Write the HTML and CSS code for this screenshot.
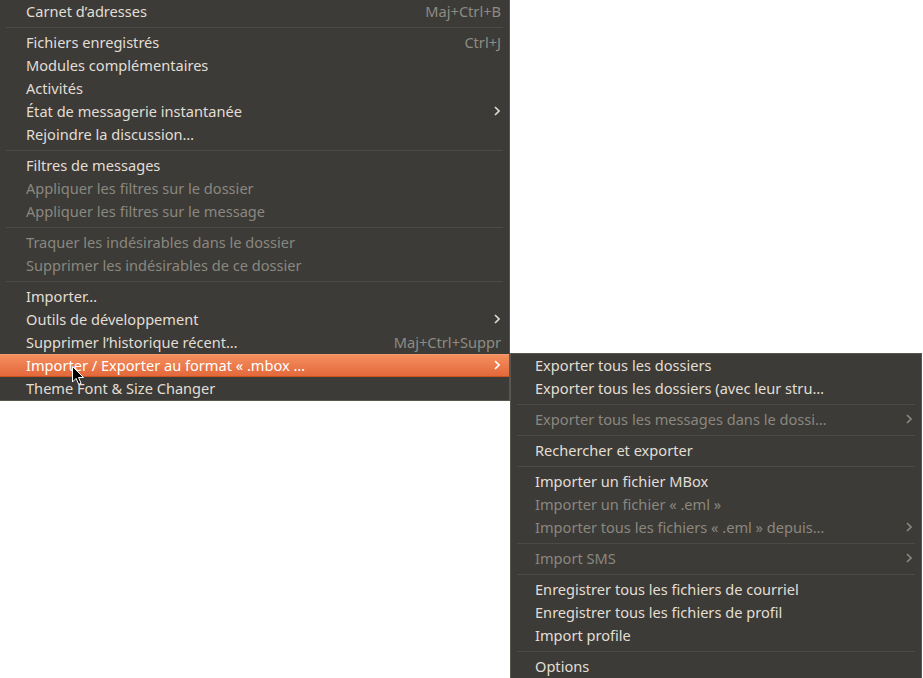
FILE: index.html
```html
<!DOCTYPE html>
<html lang="fr">
<head>
    <meta charset="UTF-8">
    <title>Outils</title>
    <link rel="stylesheet" href="styles.css">
</head>
<body>
    <div class="screen">
        <div class="menu">
            <div class="item"><span class="label">Carnet d’adresses</span><span class="accel">Maj+Ctrl+B</span></div>
            <div class="sep"></div>
            <div class="item"><span class="label">Fichiers enregistrés</span><span class="accel">Ctrl+J</span></div>
            <div class="item"><span class="label">Modules complémentaires</span></div>
            <div class="item"><span class="label">Activités</span></div>
            <div class="item"><span class="label">État de messagerie instantanée</span><svg class="arrow" viewBox="0 0 6 10"><path d="M1 1l4 4-4 4"/></svg></div>
            <div class="item"><span class="label">Rejoindre la discussion…</span></div>
            <div class="sep"></div>
            <div class="item"><span class="label">Filtres de messages</span></div>
            <div class="item disabled"><span class="label">Appliquer les filtres sur le dossier</span></div>
            <div class="item disabled"><span class="label">Appliquer les filtres sur le message</span></div>
            <div class="sep"></div>
            <div class="item disabled"><span class="label">Traquer les indésirables dans le dossier</span></div>
            <div class="item disabled"><span class="label">Supprimer les indésirables de ce dossier</span></div>
            <div class="sep"></div>
            <div class="item"><span class="label">Importer…</span></div>
            <div class="item"><span class="label">Outils de développement</span><svg class="arrow" viewBox="0 0 6 10"><path d="M1 1l4 4-4 4"/></svg></div>
            <div class="item"><span class="label">Supprimer l’historique récent…</span><span class="accel">Maj+Ctrl+Suppr</span></div>
            <div class="item active"><span class="label">Importer / Exporter au format « .mbox …</span><svg class="arrow" viewBox="0 0 6 10"><path d="M1 1l4 4-4 4"/></svg></div>
            <div class="item"><span class="label">Theme Font &amp; Size Changer</span></div>
        </div>

        <!-- sous-menu ouvert depuis « Importer / Exporter » -->
        <div class="menu submenu">
            <div class="item"><span class="label">Exporter tous les dossiers</span></div>
            <div class="item"><span class="label">Exporter tous les dossiers (avec leur stru…</span></div>
            <div class="sep"></div>
            <div class="item disabled"><span class="label">Exporter tous les messages dans le dossi…</span><svg class="arrow" viewBox="0 0 6 10"><path d="M1 1l4 4-4 4"/></svg></div>
            <div class="sep"></div>
            <div class="item"><span class="label">Rechercher et exporter</span></div>
            <div class="sep"></div>
            <div class="item"><span class="label">Importer un fichier MBox</span></div>
            <div class="item disabled"><span class="label">Importer un fichier « .eml »</span></div>
            <div class="item disabled"><span class="label">Importer tous les fichiers « .eml » depuis…</span><svg class="arrow" viewBox="0 0 6 10"><path d="M1 1l4 4-4 4"/></svg></div>
            <div class="sep"></div>
            <div class="item disabled"><span class="label">Import SMS</span><svg class="arrow" viewBox="0 0 6 10"><path d="M1 1l4 4-4 4"/></svg></div>
            <div class="sep"></div>
            <div class="item"><span class="label">Enregistrer tous les fichiers de courriel</span></div>
            <div class="item"><span class="label">Enregistrer tous les fichiers de profil</span></div>
            <div class="item"><span class="label">Import profile</span></div>
            <div class="sep"></div>
            <div class="item"><span class="label">Options</span></div>
        </div>

        <svg class="cursor" viewBox="0 0 12 19" width="12" height="19">
            <path d="M0.5 0.5v15.5l3.6-3.6 2.6 5.9 2.4-1-2.6-5.8h5z" fill="#000" stroke="#fff" stroke-width="1"/>
        </svg>
    </div>
</body>
</html>
```

FILE: styles.css
```css
body {
    margin: 0;
    background: #fff;
    overflow: hidden;
    font-family: "Noto Sans", "DejaVu Sans", sans-serif;
    font-size: 14.6px;
}

.screen {
    position: relative;
    height: 678px;
}

.menu {
    width: 510px;
    background: #3c3b37;
    color: #e2ded5;
    border-right: 1px solid #57564f;
    border-bottom: 1px solid #57564f;
    box-sizing: border-box;
}

.item {
    display: flex;
    align-items: center;
    box-sizing: border-box;
    height: 23px;
    padding: 0 8px 2px 26px;
    white-space: nowrap;
}

.item .label {
    flex: 1;
}

.accel {
    color: #8e8b84;
}

.disabled {
    color: #8a877f;
}

.arrow {
    width: 6px;
    height: 10px;
    margin-right: 1px;
}

.arrow path {
    fill: none;
    stroke: #dfdbd2;
    stroke-width: 1.6;
}

.disabled .arrow path {
    stroke: #8a877f;
}

.sep {
    height: 8px;
    display: flex;
    align-items: center;
    padding: 0 6px;
}

.sep::before {
    content: "";
    flex: 1;
    height: 1px;
    background: #4c4b46;
}

.active {
    background: linear-gradient(#f5905f, #e2673a);
    color: #fff;
    box-shadow: inset 0 -1px 0 #c9521f, inset 0 1px 0 #f39a70;
}

.active .arrow path {
    stroke: #fff;
}

.submenu {
    position: absolute;
    left: 510px;
    top: 353px;
    width: 412px;
    border: 1px solid #57564f;
}

.submenu .item {
    padding-left: 24px;
}

.cursor {
    position: absolute;
    left: 72px;
    top: 366px;
}
```
